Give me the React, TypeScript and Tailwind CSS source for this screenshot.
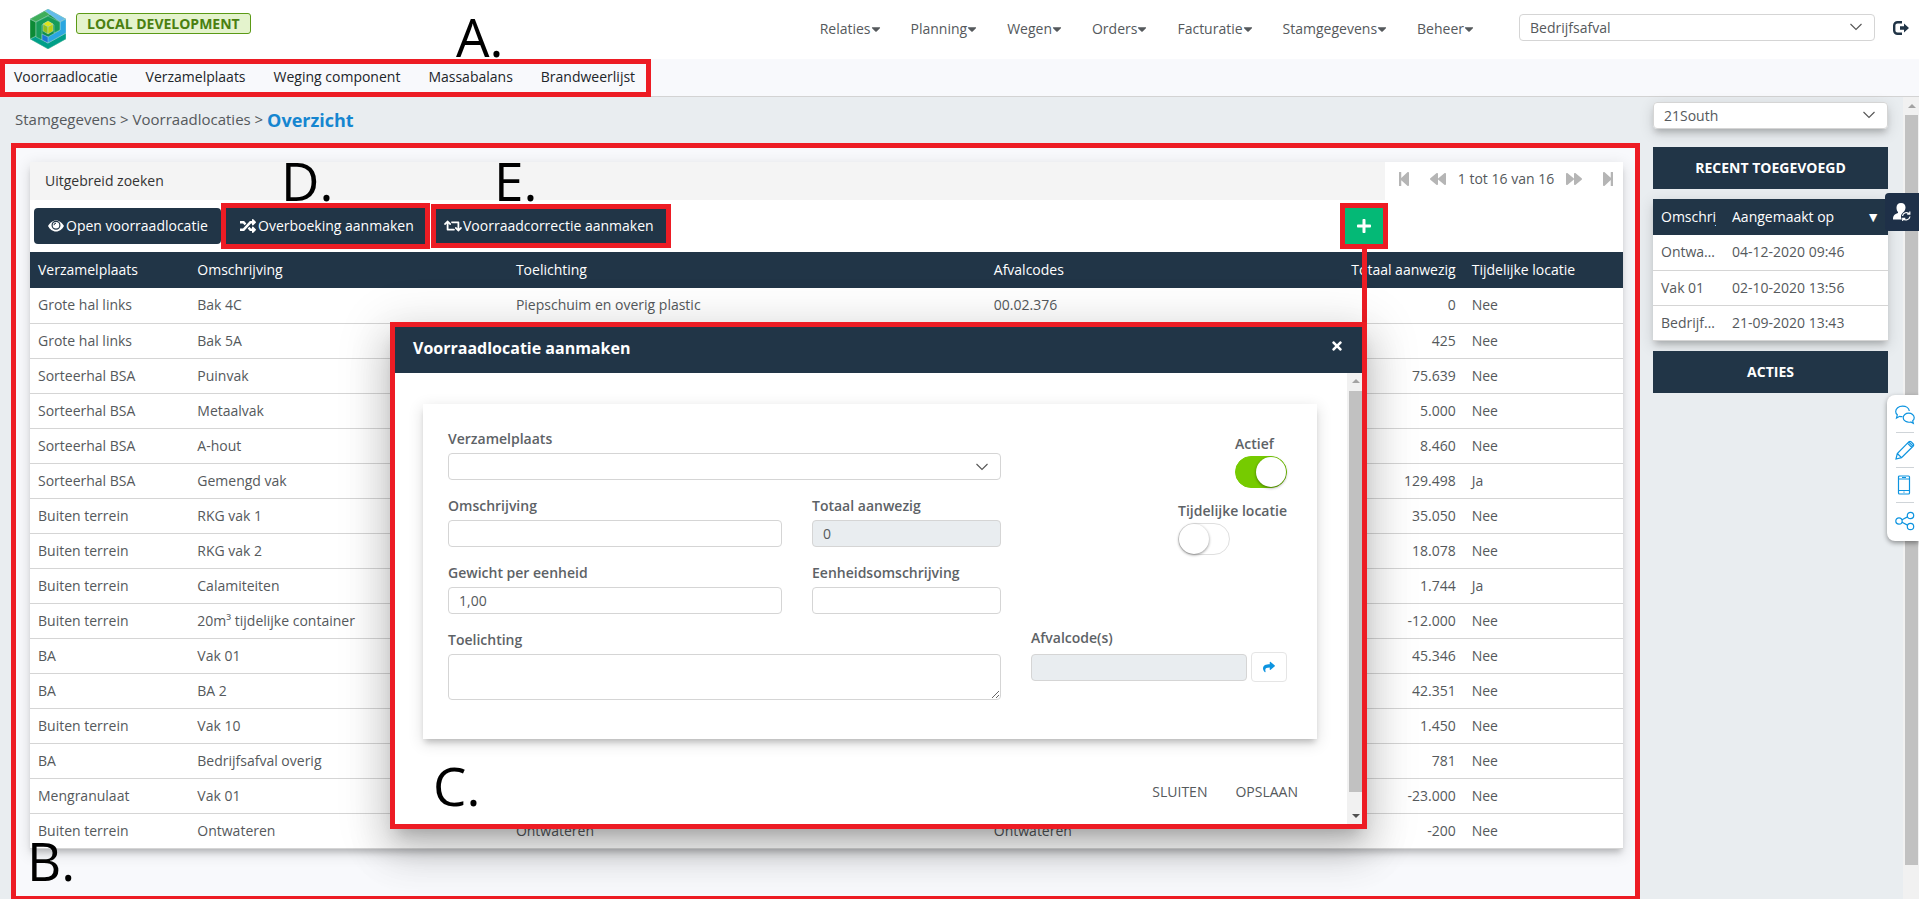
import type { ReactNode } from "react";
import {
  FaBackward,
  FaCaretDown,
  FaForward,
  FaPlus,
  FaRandom,
  FaRetweet,
  FaShare,
  FaStepBackward,
  FaStepForward,
  FaTimes,
} from "react-icons/fa";

const menu = ["Relaties", "Planning", "Wegen", "Orders", "Facturatie", "Stamgegevens", "Beheer"];

const subMenu = ["Voorraadlocatie", "Verzamelplaats", "Weging component", "Massabalans", "Brandweerlijst"];

// verzamelplaats, omschrijving, toelichting, afvalcodes, totaal, tijdelijk
const rows = [
  ["Grote hal links", "Bak 4C", "Piepschuim en overig plastic", "00.02.376", "0", "Nee"],
  ["Grote hal links", "Bak 5A", "", "", "425", "Nee"],
  ["Sorteerhal BSA", "Puinvak", "", "", "75.639", "Nee"],
  ["Sorteerhal BSA", "Metaalvak", "", "", "5.000", "Nee"],
  ["Sorteerhal BSA", "A-hout", "", "", "8.460", "Nee"],
  ["Sorteerhal BSA", "Gemengd vak", "", "", "129.498", "Ja"],
  ["Buiten terrein", "RKG vak 1", "", "", "35.050", "Nee"],
  ["Buiten terrein", "RKG vak 2", "", "", "18.078", "Nee"],
  ["Buiten terrein", "Calamiteiten", "", "", "1.744", "Ja"],
  ["Buiten terrein", "20m³ tijdelijke container", "", "", "-12.000", "Nee"],
  ["BA", "Vak 01", "", "", "45.346", "Nee"],
  ["BA", "BA 2", "", "", "42.351", "Nee"],
  ["Buiten terrein", "Vak 10", "", "", "1.450", "Nee"],
  ["BA", "Bedrijfsafval overig", "", "", "781", "Nee"],
  ["Mengranulaat", "Vak 01", "", "", "-23.000", "Nee"],
  ["Buiten terrein", "Ontwateren", "Ontwateren", "Ontwateren", "-200", "Nee"],
];

const recent = [
  ["Ontwateren", "04-12-2020 09:46"],
  ["Vak 01", "02-10-2020 13:56"],
  ["Bedrijfsafval overig", "21-09-2020 13:43"],
];

const cardShadow = "shadow-[0_5px_6px_-2px_rgba(0,0,0,0.2),0_4px_14px_1px_rgba(0,0,0,0.12)]";
const fieldClass = "block h-[27px] w-full rounded border border-[#d5d5d5] px-2.5 text-sm outline-none";

function Logo() {
  return (
    <svg viewBox="0 0 36 40" className="h-10 w-9" aria-label="Logo">
      <path d="M18 0 36 10V30L18 40 0 30V10z" fill="#0f8f4c" />
      <g stroke="#bfe3dc" strokeWidth="0.4" strokeLinejoin="round">
        <path d="M0 30 6 27 18 34 36 24V30L18 40z" fill="#009f88" />
        <path d="M0 10 6 13V27L0 30z" fill="#0c8a35" />
        <path d="M0 10 15 2 21 5 6 13z" fill="#3fae5a" />
        <path d="M15 2 18 0 36 10 30 13z" fill="#62bbea" />
        <path d="M36 10V24L18 34 13 31V26L18 28 30 21V13z" fill="#2aa6e0" />
        <path d="M6 13 18 7 30 13V21L24 24V16L18 12.500 12 16V31L6 28z" fill="#169c58" />
        <path d="M12 25 18 28V34L12 31z" fill="#1b76d2" />
        <path d="M13 15 18 12 23 15 18 18z" fill="#dfe31c" />
        <path d="M13 15 18 18V25L13 22z" fill="#8fbe1e" />
        <path d="M23 15 18 18V25L23 22z" fill="#b9cf12" />
      </g>
    </svg>
  );
}

function Chevron({ className }: { className: string }) {
  return (
    <svg viewBox="0 0 12 8" className={className} fill="none" stroke="#555" strokeWidth="1.1">
      <path d="M.5 1 6 6.500 11.500 1" />
    </svg>
  );
}

function EyeIcon() {
  return (
    <svg viewBox="0 0 16 12" className="h-3 w-4">
      <path d="M8 .5C4.500.5 1.600 3 0 6c1.600 3 4.500 5.500 8 5.500S14.400 9 16 6C14.400 3 11.500.5 8 .5z" fill="#fff" />
      <circle cx="8" cy="5.200" r="3.900" fill="none" stroke="#213547" strokeWidth="1.200" />
      <path d="M6 5.200a2 2 0 0 1 2-2" fill="none" stroke="#213547" strokeWidth="1" />
    </svg>
  );
}

function LogoutIcon() {
  return (
    <svg viewBox="0 0 16 14" className="h-3.5 w-4" fill="#213547">
      <path d="M9 1.200H4.500A3.300 3.300 0 0 0 1.200 4.500V9.500A3.300 3.300 0 0 0 4.500 12.800H9" fill="none" stroke="#213547" strokeWidth="2.400" />
      <path d="M7 5.300h4V2.500L16 7 11 11.500V8.700H7z" />
    </svg>
  );
}

function UserSyncIcon() {
  return (
    <svg viewBox="0 0 18 18" className="size-[18px]">
      <path d="M8 0c3 0 4.500 2 4.500 4.500C12.500 7 11 9 10 9.500c-1.500 1.500-2 2.500-2 4 0 1 .3 2 .8 3H0c0-4 1.500-5.500 5-6.500V9C4 8 3.500 6.500 3.500 4.500 3.500 2 5 0 8 0z" fill="#fff" />
      <path d="M9.500 13a4 4 0 0 1 7-2M17 13.500a4 4 0 0 1-7 2M16.800 8.500v2.700h-2.600M9.700 18v-2.700h2.600" fill="none" stroke="#fff" strokeWidth="1.200" />
    </svg>
  );
}

function Label({ htmlFor, children }: { htmlFor: string; children: ReactNode }) {
  return (
    <label htmlFor={htmlFor} className="block h-6 text-sm leading-5 font-semibold whitespace-nowrap text-[#5d6266]">
      {children}
    </label>
  );
}

function Toggle({ id, label, defaultChecked }: { id: string; label: string; defaultChecked?: boolean }) {
  return (
    <div>
      <label htmlFor={id} className="block h-[22px] text-sm leading-5 font-semibold whitespace-nowrap text-[#5d6266]">
        {label}
      </label>
      <input
        id={id}
        type="checkbox"
        role="switch"
        defaultChecked={defaultChecked}
        className="flex h-8 w-[52px] appearance-none rounded-full border border-[#dfdfdf] bg-white before:size-[30px] before:rounded-full before:bg-white before:shadow-[0_1px_3px_rgba(0,0,0,0.45)] checked:justify-end checked:border-[#76cb00] checked:bg-[#76cb00]"
      />
    </div>
  );
}

function Letter({ className, children }: { className: string; children: ReactNode }) {
  return <span className={`absolute z-30 text-[53px] leading-none font-medium text-black ${className}`}>{children}</span>;
}

function CreateDialog() {
  return (
    <div
      role="dialog"
      aria-labelledby="dialog-title"
      className="absolute top-[160px] right-[256px] z-10 w-[977px] border-5 border-[#ed1c24] bg-white shadow-[0_11px_15px_-7px_rgba(0,0,0,0.2),0_24px_38px_3px_rgba(0,0,0,0.14),0_9px_46px_8px_rgba(0,0,0,0.12)]"
    >
      <div className="flex h-[46px] items-center justify-between bg-[#213547] px-[18px] text-white">
        <h2 id="dialog-title" className="pb-1 text-base font-bold">Voorraadlocatie aanmaken</h2>
        <button type="button" aria-label="Sluit venster" className="mb-2">
          <FaTimes className="size-3.5" />
        </button>
      </div>
      <div className="flex">
        <form className="flex-1 pt-[31px] pr-[30px] pl-7">
          <div className={`flex h-[335px] justify-between bg-white pt-[25px] pr-[30px] pl-[25px] ${cardShadow}`}>
            <div className="grid w-[553px] grid-cols-[334px_189px] content-start gap-x-[30px] gap-y-4">
              <div className="relative col-span-2">
                <Label htmlFor="plaats">Verzamelplaats</Label>
                <select id="plaats" className={`${fieldClass} appearance-none bg-white`}>
                  <option></option>
                </select>
                <Chevron className="pointer-events-none absolute right-[13px] bottom-[9px] h-2 w-3" />
              </div>
              <div>
                <Label htmlFor="omschrijving">Omschrijving</Label>
                <input id="omschrijving" type="text" className={fieldClass} />
              </div>
              <div>
                <Label htmlFor="totaal">Totaal aanwezig</Label>
                <input id="totaal" type="text" disabled defaultValue="0" className={`${fieldClass} bg-[#e9edf0]`} />
              </div>
              <div>
                <Label htmlFor="gewicht">Gewicht per eenheid</Label>
                <input id="gewicht" type="text" defaultValue="1,00" className={fieldClass} />
              </div>
              <div>
                <Label htmlFor="eenheid">Eenheidsomschrijving</Label>
                <input id="eenheid" type="text" className={fieldClass} />
              </div>
              <div className="col-span-2">
                <Label htmlFor="toelichting">Toelichting</Label>
                <textarea id="toelichting" className="block h-[46px] w-full rounded border border-[#d5d5d5] px-2.5 text-sm" />
              </div>
            </div>
            <div className="flex w-64 flex-col items-end gap-[13px] pt-[5px]">
              <div className="w-[52px]">
                <Toggle id="actief" label="Actief" defaultChecked />
              </div>
              <div className="w-[109px]">
                <Toggle id="tijdelijk" label="Tijdelijke locatie" />
              </div>
              <div className="mt-[60px] w-full">
                <Label htmlFor="codes">Afvalcode(s)</Label>
                <div className="flex items-center gap-1">
                  <input id="codes" type="text" disabled className={`${fieldClass} flex-1 bg-[#e9edf0]`} />
                  <button type="button" aria-label="Afvalcodes kiezen" className="flex h-[30px] w-9 items-center justify-center rounded border border-[#e5e5e5] text-[#0d94e0]">
                    <FaShare className="size-3" />
                  </button>
                </div>
              </div>
            </div>
          </div>
          <div className="flex h-[85px] items-end justify-end gap-7 pr-[19px] pb-[22px] text-sm">
            <button type="button">SLUITEN</button>
            <button type="submit">OPSLAAN</button>
          </div>
        </form>
        <div className="flex w-[15px] flex-col items-center justify-between bg-[#f1f1f1] pl-0.5" aria-hidden="true">
          <span className="mt-1.5 mb-2 border-x-4 border-b-4 border-x-transparent border-b-[#a3a3a3]" />
          <span className="w-full flex-1 bg-[#c1c1c1]" />
          <span className="mt-[22px] mb-1.5 border-x-4 border-t-4 border-x-transparent border-t-[#505050]" />
        </div>
      </div>
      <Letter className="bottom-3 left-[38px]">C.</Letter>
    </div>
  );
}

function ToolBar() {
  return (
    <div className="flex h-[52px] items-center pl-1 text-sm text-white">
      <button type="button" className="flex h-9 w-[187px] items-center gap-0.5 rounded bg-[#213547] pl-3.5 whitespace-nowrap">
        <EyeIcon />
        Open voorraadlocatie
      </button>
      <button type="button" className="ml-[5px] flex h-9 w-[199px] items-center gap-0.5 bg-[#213547] pl-3.5 whitespace-nowrap outline-5 outline-[#ed1c24]">
        <FaRandom className="size-4" />
        Overboeking aanmaken
      </button>
      <button type="button" className="ml-[11px] flex h-[34px] w-[230px] items-center gap-px bg-[#213547] pl-2 whitespace-nowrap outline-5 outline-[#ed1c24]">
        <FaRetweet className="size-[18px]" />
        Voorraadcorrectie aanmaken
      </button>
      <button type="button" aria-label="Toevoegen" className="relative mr-[240px] ml-auto flex h-9 w-[38px] items-center justify-center bg-[#04b976] outline-5 outline-[#ed1c24]">
        <FaPlus className="size-4" />
        <span className="absolute top-full right-4 h-20 w-[5px] bg-[#ed1c24]" />
      </button>
    </div>
  );
}

function StockTable() {
  return (
    <table className="w-full table-fixed border-collapse text-sm">
      <colgroup>
        <col className="w-[10%]" />
        <col className="w-[20%]" />
        <col className="w-[30%]" />
        <col className="w-[20%]" />
        <col className="w-[10%]" />
        <col className="w-[10%]" />
      </colgroup>
      <thead>
        <tr className="h-9 bg-[#213547] text-left text-white [&>th]:px-2 [&>th]:font-normal [&>th]:whitespace-nowrap">
          <th>Verzamelplaats</th>
          <th>Omschrijving</th>
          <th>Toelichting</th>
          <th>Afvalcodes</th>
          <th className="text-right">Totaal aanwezig</th>
          <th>Tijdelijke locatie</th>
        </tr>
      </thead>
      <tbody>
        {rows.map((row, i) => (
          <tr key={i} className="h-[35px] border-b border-[#d5d5d5]">
            {row.map((cell, j) => (
              <td key={j} className={j === 4 ? "px-2 text-right" : "px-2"}>{cell}</td>
            ))}
          </tr>
        ))}
      </tbody>
    </table>
  );
}

function SideBar() {
  return (
    <aside className="flex w-[235px] shrink-0 flex-col pt-[5px]">
      <div className={`relative mb-[18px] rounded ${cardShadow}`}>
        <select aria-label="Vestiging" className={`${fieldClass} appearance-none bg-white`}>
          <option>21South</option>
        </select>
        <Chevron className="pointer-events-none absolute top-[9px] right-[13px] h-2 w-3" />
      </div>
      <h2 className="mb-2.5 flex h-[42px] items-center justify-center bg-[#213547] text-sm font-bold text-white">
        RECENT TOEGEVOEGD
      </h2>
      <table className={`mb-2.5 w-full table-fixed border-collapse bg-white text-sm ${cardShadow}`}>
        <colgroup>
          <col className="w-[71px]" />
          <col />
        </colgroup>
        <thead>
          <tr className="h-9 bg-[#213547] text-left text-white [&>th]:px-2 [&>th]:font-normal">
            <th><div className="overflow-hidden whitespace-nowrap">Omschrijving</div></th>
            <th>
              <div className="flex items-center justify-between">
                Aangemaakt op <span>▼</span>
              </div>
            </th>
          </tr>
        </thead>
        <tbody>
          {recent.map(([name, date]) => (
            <tr key={name} className="h-[35px] border-b border-[#d5d5d5]">
              <td className="truncate px-2">{name}</td>
              <td className="px-2">{date}</td>
            </tr>
          ))}
        </tbody>
      </table>
      <h2 className="flex h-[42px] items-center justify-center bg-[#213547] text-sm font-bold text-white">ACTIES</h2>
    </aside>
  );
}

function QuickTools() {
  return (
    <div className="absolute top-[395px] right-0 z-20 flex w-8 flex-col items-center rounded-l-lg bg-white py-[3px] pl-1 shadow-[0_2px_5px_rgba(0,0,0,0.4)] [&_svg]:size-5 [&_svg]:shrink-0 [&_svg]:fill-none [&_svg]:stroke-[#0d94e0] [&>button]:flex [&>button]:h-[35px] [&>button]:w-[18px] [&>button]:items-center [&>button]:justify-center [&>button]:border-[#cfd4d8] [&>button:not(:last-child)]:border-b">
      <button type="button" aria-label="Chat">
        <svg viewBox="0 0 20 20" strokeWidth="1.200">
          <path d="M7.500 11.500c-1 .2-2 0-2.800-.2L1.500 13l.8-3.200C1.300 9 .7 7.800.7 6.500.700 3.500 3.600 1.200 7.500 1.200c3.600 0 6.500 2 6.800 4.800" />
          <path d="M13.700 8.200c3 0 5.500 2 5.500 4.500 0 1.300-.5 2.300-1.500 3.100l.6 2.500-2.500-1.300c-4 .9-7.600-1.200-7.600-4.300 0-2.500 2.500-4.500 5.500-4.500z" />
        </svg>
      </button>
      <button type="button" aria-label="Notitie">
        <svg viewBox="0 0 20 20" strokeWidth="1.200">
          <path d="M1 19l1.300-5.500L14 1.700a1.500 1.500 0 0 1 2 0L18.300 4a1.500 1.500 0 0 1 0 2L6.500 17.700zM2.300 13.500l4.200 4.200M12.500 3.200l4.300 4.300M13.800 2l4.200 4.200" />
        </svg>
      </button>
      <button type="button" aria-label="Mobiel">
        <svg viewBox="0 0 20 20" strokeWidth="1.200">
          <path d="M4.500 1h9a1 1 0 0 1 1 1v16a1 1 0 0 1-1 1h-9a1 1 0 0 1-1-1V2a1 1 0 0 1 1-1zM3.500 4h11M3.500 15.500h11M7 2.500h4M8.500 17.200h1" />
        </svg>
      </button>
      <button type="button" aria-label="Delen">
        <svg viewBox="0 0 20 20" strokeWidth="1.200">
          <circle cx="4" cy="10" r="3.200" />
          <circle cx="15.500" cy="4.500" r="3.200" />
          <circle cx="15.500" cy="15.500" r="3.200" />
          <path d="M7 8.700 12.500 5.900M7 11.300 12.500 14.100" />
        </svg>
      </button>
    </div>
  );
}

export default function App() {
  return (
    <div className="relative flex min-h-screen flex-col overflow-hidden bg-[#e9edf0] font-['Open_Sans',sans-serif] text-sm text-[#55595c]">
      <header className="flex h-[59px] items-start bg-white pr-2.5 pl-[30px]">
        <div className="pt-[9px]"><Logo /></div>
        <span className="mt-[13px] ml-2.5 flex h-[21px] items-center rounded-[3px] border border-[#5b9a16] bg-[#e4f3cd] px-2.5 text-sm font-bold text-[#4a8010]">
          LOCAL DEVELOPMENT
        </span>
        <nav className="mt-[19px] ml-auto flex gap-[30px] pr-[45px]">
          {menu.map((item) => (
            <a key={item} href="#" className="flex items-center">
              {item}
              <FaCaretDown className="h-3.5 w-2.5" />
            </a>
          ))}
        </nav>
        <div className="relative mt-3.5 w-[356px]">
          <select aria-label="Administratie" className={`${fieldClass} appearance-none bg-white`}>
            <option>Bedrijfsafval</option>
          </select>
          <Chevron className="pointer-events-none absolute top-[9px] right-[13px] h-2 w-3" />
        </div>
        <button type="button" aria-label="Uitloggen" className="mt-[21px] ml-[18px]">
          <LogoutIcon />
        </button>
      </header>

      <div className="flex h-[38px] border-b border-[#d3d3d3] bg-[#f8f9fc] text-[#212529]">
        <nav className="relative flex h-[38px] w-[651px] items-center gap-7 border-5 border-[#ed1c24] pb-0.5 pl-[9px] whitespace-nowrap">
          {subMenu.map((item) => (
            <a key={item} href="#">{item}</a>
          ))}
          <Letter className="-top-[54px] left-[451px]">A.</Letter>
        </nav>
      </div>

      <div className="flex flex-1">
        <main className="flex min-w-0 flex-1 flex-col pl-[11px]">
          <div className="flex h-[46px] items-center pl-1 text-[15px]">
            <a href="#">Stamgegevens</a>
            <span>&nbsp;&gt;&nbsp;</span>
            <a href="#">Voorraadlocaties</a>
            <span>&nbsp;&gt;&nbsp;</span>
            <h1 className="text-lg font-bold text-[#1586d0]">Overzicht</h1>
          </div>
          <section className="flex-1 border-5 border-b-3 border-[#ed1c24] bg-[#f8f9fc] pt-3.5 pr-3 pb-[47px] pl-3.5">
            <div className={`relative bg-white ${cardShadow}`}>
              <div className="flex h-[38px] items-center">
                <a href="#" className="flex h-full flex-1 items-center bg-[#f4f4f4] pl-[15px] text-[#333]">Uitgebreid zoeken</a>
                <div className="flex w-[238px] items-center justify-between pr-[7px] pb-1 pl-[11px] whitespace-nowrap [&_svg]:text-[#b5b5b5]">
                  <button type="button" aria-label="Eerste"><FaStepBackward className="size-4" /></button>
                  <button type="button" aria-label="Vorige" className="ml-1.5"><FaBackward className="size-4" /></button>
                  <span>1 tot 16 van 16</span>
                  <button type="button" aria-label="Volgende" className="mr-1.5"><FaForward className="size-4" /></button>
                  <button type="button" aria-label="Laatste"><FaStepForward className="size-4" /></button>
                </div>
              </div>
              <ToolBar />
              <StockTable />
              <CreateDialog />
              <Letter className="-top-2 left-[251px]">D.</Letter>
              <Letter className="-top-2 left-[464px]">E.</Letter>
              <Letter className="-bottom-[38px] -left-[3px]">B.</Letter>
            </div>
          </section>
        </main>
        <div className="flex pr-[15px] pl-[13px]">
          <SideBar />
        </div>
        <div className="flex w-4 flex-col items-center bg-[#f1f1f1] pr-px pb-[34px] pl-0.5" aria-hidden="true">
          <span className="my-[7px] border-x-4 border-b-4 border-x-transparent border-b-[#a3a3a3]" />
          <span className="w-full flex-1 bg-[#c1c1c1]" />
        </div>
      </div>

      <button type="button" aria-label="Gebruiker wisselen" className="absolute top-[193px] right-0 z-20 flex h-[38px] w-[34px] items-center justify-center rounded-l bg-[#1e3048]">
        <UserSyncIcon />
      </button>
      <QuickTools />
    </div>
  );
}
